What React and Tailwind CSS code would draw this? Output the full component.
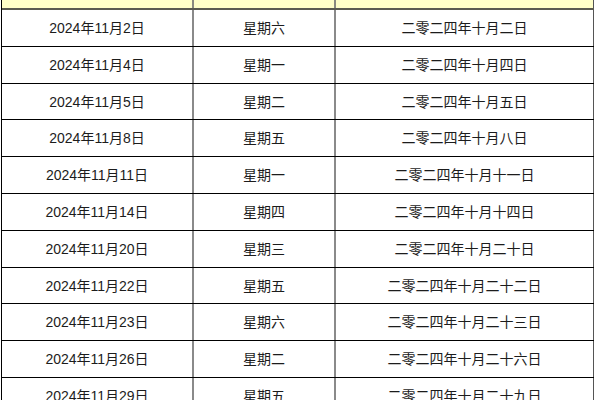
const rows = [
  ['2024年11月2日', '星期六', '二零二四年十月二日'],
  ['2024年11月4日', '星期一', '二零二四年十月四日'],
  ['2024年11月5日', '星期二', '二零二四年十月五日'],
  ['2024年11月8日', '星期五', '二零二四年十月八日'],
  ['2024年11月11日', '星期一', '二零二四年十月十一日'],
  ['2024年11月14日', '星期四', '二零二四年十月十四日'],
  ['2024年11月20日', '星期三', '二零二四年十月二十日'],
  ['2024年11月22日', '星期五', '二零二四年十月二十二日'],
  ['2024年11月23日', '星期六', '二零二四年十月二十三日'],
  ['2024年11月26日', '星期二', '二零二四年十月二十六日'],
  ['2024年11月29日', '星期五', '二零二四年十月二十九日'],
];

// row heights follow the screenshot's 36.8px pitch, rounded per row
function rowHeight(i) {
  return Math.round(10 + 36.8 * (i + 1)) - Math.round(10 + 36.8 * i);
}

export default function App() {
  return (
    <div
      className="h-[400px] w-[600px] overflow-hidden bg-white text-[14px] text-[#1c1c1c]"
      style={{ fontFamily: '"Liberation Sans", "Noto Sans CJK SC", sans-serif' }}
    >
      <div className="ml-[1px] w-[593px] border-l border-black">
        {/* header strip, text cut off above */}
        <div className="grid h-[10px] grid-cols-[192px_142px_258px] border-b-2 border-[#5a5a50] bg-[#ffffc8]">
          <div className="border-r-2 border-[#8a8a80]" />
          <div className="border-r-2 border-[#8a8a80]" />
          <div className="border-r border-[#555]" />
        </div>

        {rows.map((row, i) => (
          <div
            key={row[0]}
            className="grid grid-cols-[192px_142px_258px] border-b border-black"
            style={{ height: rowHeight(i) }}
          >
            <div className="flex items-center justify-center border-r-2 border-[#8a8a8a] pt-px">{row[0]}</div>
            <div className="flex items-center justify-center border-r-2 border-[#8a8a8a] pt-px">{row[1]}</div>
            <div className="flex items-center justify-center border-r border-[#555] pt-px">{row[2]}</div>
          </div>
        ))}
      </div>
    </div>
  );
}
